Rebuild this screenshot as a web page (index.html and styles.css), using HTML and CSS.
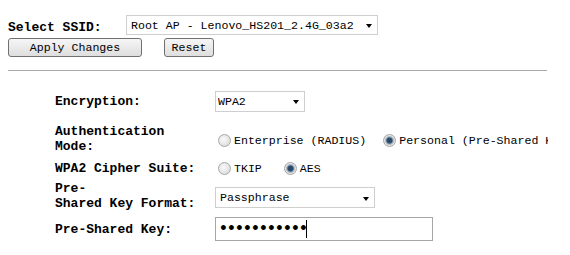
FILE: index.html
```html
<!DOCTYPE html>
<html lang="en">
<head>
    <meta charset="UTF-8">
    <title>Wireless Security Setup</title>
    <link rel="stylesheet" href="styles.css">
</head>
<body>
    <div class="page">
        <form class="ssid-form">
            <div class="ssid-row">
                <label class="ssid-label" for="ssid">Select SSID:</label>
                <span class="dropdown dropdown-ssid">
                    <select id="ssid">
                        <option>Root AP - Lenovo_HS201_2.4G_03a2</option>
                    </select>
                </span>
            </div>
            <div class="actions">
                <button type="button" class="btn btn-apply">Apply Changes</button>
                <button type="button" class="btn btn-reset">Reset</button>
            </div>
        </form>

        <div class="divider"></div>

        <div class="settings">
            <div class="field-label">Encryption:</div>
            <div class="field">
                <span class="dropdown dropdown-enc">
                    <select>
                        <option>WPA2</option>
                    </select>
                </span>
            </div>

            <div class="field-label">Authentication<br>Mode:</div>
            <div class="field field-radios">
                <label class="opt"><input type="radio" name="auth"> Enterprise (RADIUS)</label>
                <label class="opt"><input type="radio" name="auth" checked> Personal (Pre-Shared Key)</label>
            </div>

            <div class="field-label">WPA2 Cipher Suite:</div>
            <div class="field field-cipher">
                <label class="opt"><input type="radio" name="cipher"> TKIP</label>
                <label class="opt"><input type="radio" name="cipher" checked> AES</label>
            </div>

            <div class="field-label">Pre-<br>Shared Key Format:</div>
            <div class="field field-format">
                <span class="dropdown dropdown-format">
                    <select>
                        <option>Passphrase</option>
                    </select>
                </span>
            </div>

            <div class="field-label">Pre-Shared Key:</div>
            <div class="field">
                <span class="key-box">
                    <input type="password" class="key-input" value="12345678901">
                    <span class="caret"></span>
                </span>
            </div>
        </div>
    </div>
</body>
</html>
```

FILE: styles.css
```css
body {
    margin: 0;
    background: #fff;
    color: #000;
    font-family: "Liberation Mono", monospace;
}
.page {
    width: 540px;
    padding: 15px 0 0 8px;
    overflow: hidden;
}
.ssid-row {
    display: flex;
    align-items: flex-end;
}
.ssid-label {
    width: 118px;
    font-size: 13px;
    font-weight: bold;
    line-height: 15px;
}
.dropdown {
    position: relative;
    display: inline-block;
}
.dropdown::after {
    content: "";
    position: absolute;
    right: 6px;
    top: 50%;
    margin-top: -1px;
    border-left: 3px solid transparent;
    border-right: 3px solid transparent;
    border-top: 4px solid #000;
    pointer-events: none;
}
.dropdown select {
    appearance: none;
    -webkit-appearance: none;
    display: block;
    width: 100%;
    height: 21px;
    margin: 0;
    padding: 0 0 0 4px;
    border: 1px solid #cfcfcf;
    border-radius: 0;
    background: #fff;
    color: #000;
    font-family: "Liberation Mono", monospace;
    font-size: 11.6px;
}
.dropdown-ssid {
    width: 252px;
}
.dropdown-ssid select {
    height: 20px;
}
.dropdown-enc {
    width: 90px;
}
.dropdown-enc select {
    padding-left: 2px;
}
.dropdown-format {
    width: 160px;
}
.actions {
    display: flex;
    gap: 22px;
    margin-top: 3px;
}
.btn {
    height: 19px;
    margin: 0;
    padding: 0;
    border: 1px solid #707070;
    border-radius: 3px;
    background: linear-gradient(to bottom, #f6f6f6, #dedede);
    color: #000;
    font-family: "Liberation Mono", monospace;
    font-size: 11.6px;
}
.btn-apply {
    width: 134px;
}
.btn-reset {
    width: 50px;
}
.divider {
    width: 539px;
    height: 1px;
    margin-top: 13px;
    background: #a9a9a9;
}
.settings {
    display: grid;
    grid-template-columns: 160px auto;
    grid-template-rows: 30px 45px 14px 41px 26px;
    align-items: center;
    margin-top: 15px;
    padding-left: 47px;
}
.field-label {
    font-size: 13px;
    font-weight: bold;
    line-height: 15px;
    white-space: nowrap;
}
.field {
    display: flex;
    align-items: center;
    white-space: nowrap;
    font-size: 11.6px;
}
.field-radios {
    margin-top: 3px;
}
.field-format {
    margin-top: 4px;
}
.opt {
    display: flex;
    align-items: center;
}
.opt + .opt {
    margin-left: 14px;
}
.field-cipher .opt + .opt {
    margin-left: 19px;
}
.opt input {
    appearance: none;
    -webkit-appearance: none;
    width: 13px;
    height: 13px;
    margin: 0 3px 0 3px;
    border: 1px solid #a8a8a8;
    border-radius: 50%;
    background: radial-gradient(circle at 40% 40%, #fafafa, #d4d4d4);
}
.opt input:checked {
    background: radial-gradient(circle, #2d4a66 0, #2d4a66 2.5px, #8fa6bb 3.5px, #e6e6e6 5px, #cfcfcf 6px);
}
.key-box {
    position: relative;
    display: inline-block;
}
.key-input {
    display: block;
    width: 218px;
    height: 24px;
    margin: 0;
    padding: 0 0 0 2px;
    box-sizing: border-box;
    border: 1px solid #a7a7a7;
    border-radius: 0;
    outline: none;
    font-family: "Liberation Mono", monospace;
    font-size: 18px;
    letter-spacing: -2.8px;
}
.caret {
    position: absolute;
    left: 91px;
    top: 3px;
    width: 1px;
    height: 18px;
    background: #000;
}
```
